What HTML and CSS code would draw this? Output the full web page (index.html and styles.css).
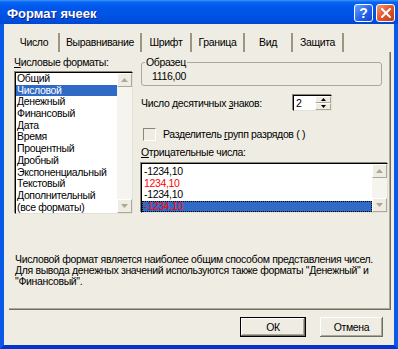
FILE: index.html
```html
<!DOCTYPE html>
<html lang="ru">
<head>
<meta charset="utf-8">
<title>Формат ячеек</title>
<link rel="stylesheet" href="styles.css">
</head>
<body>
<div class="window">
  <div class="titlebar">
    <span class="title">Формат ячеек</span>
    <div class="tb-buttons">
      <span class="tb-btn help">?</span>
      <span class="tb-btn close"><svg width="10" height="10" viewBox="0 0 10 10"><path d="M1 1L9 9M9 1L1 9" stroke="#fff" stroke-width="2" stroke-linecap="square"/></svg></span>
    </div>
  </div>
  <div class="frame">
    <div class="tabs">
      <div class="tab tab-1">Число</div>
      <div class="tab tab-2">Выравнивание</div>
      <div class="tab tab-3">Шрифт</div>
      <div class="tab tab-4">Граница</div>
      <div class="tab tab-5">Вид</div>
      <div class="tab tab-6">Защита</div>
    </div>
    <div class="panel">
      <div class="panel-top">
        <div class="left-col">
          <div class="label"><u>Ч</u>исловые форматы:</div>
          <div class="listbox fmt-list">
            <div class="items">
              <div class="item">Общий</div>
              <div class="item selected">Числовой</div>
              <div class="item">Денежный</div>
              <div class="item">Финансовый</div>
              <div class="item">Дата</div>
              <div class="item">Время</div>
              <div class="item">Процентный</div>
              <div class="item">Дробный</div>
              <div class="item">Экспоненциальный</div>
              <div class="item">Текстовый</div>
              <div class="item">Дополнительный</div>
              <div class="item">(все форматы)</div>
            </div>
            <div class="vscroll">
              <div class="sbtn"><svg width="7" height="4" viewBox="0 0 7 4"><path d="M0 4L3.5 0L7 4Z" fill="#aca899"/></svg></div>
              <div class="track"></div>
              <div class="sbtn"><svg width="7" height="4" viewBox="0 0 7 4"><path d="M0 0L3.5 4L7 0Z" fill="#aca899"/></svg></div>
            </div>
          </div>
        </div>
        <div class="right-col">
          <fieldset class="sample">
            <legend>Образец</legend>
            <div class="sample-value">1116,00</div>
          </fieldset>
          <div class="dec-row">
            <span class="dec-label">Число десятичных <u>з</u>наков:</span>
            <div class="spin">
              <span class="spin-value">2</span>
              <div class="spin-btns">
                <div class="spin-btn"><svg width="5" height="3" viewBox="0 0 5 3"><path d="M0 3L2.5 0L5 3Z" fill="#000"/></svg></div>
                <div class="spin-btn"><svg width="5" height="3" viewBox="0 0 5 3"><path d="M0 0L2.5 3L5 0Z" fill="#000"/></svg></div>
              </div>
            </div>
          </div>
          <div class="check-row">
            <span class="checkbox"></span>
            <span class="check-label">Разделитель <u>г</u>рупп разрядов ( )</span>
          </div>
          <div class="label neg-label"><u>О</u>трицательные числа:</div>
          <div class="listbox neg-list">
            <div class="items">
              <div class="item">-1234,10</div>
              <div class="item red">1234,10</div>
              <div class="item">-1234,10</div>
              <div class="item red selected focus">-1234,10</div>
            </div>
            <div class="vscroll">
              <div class="sbtn"><svg width="7" height="4" viewBox="0 0 7 4"><path d="M0 4L3.5 0L7 4Z" fill="#aca899"/></svg></div>
              <div class="track"></div>
              <div class="sbtn"><svg width="7" height="4" viewBox="0 0 7 4"><path d="M0 0L3.5 4L7 0Z" fill="#aca899"/></svg></div>
            </div>
          </div>
        </div>
      </div>
      <p class="desc">Числовой формат является наиболее общим способом представления чисел.<br>Для вывода денежных значений используются также форматы "Денежный" и<br>"Финансовый".</p>
    </div>
    <div class="buttons">
      <button class="btn btn-ok">ОК</button>
      <button class="btn btn-cancel">Отмена</button>
    </div>
  </div>
</div>
</body>
</html>
```
FILE: styles.css
```css
* { box-sizing: border-box; }
html, body { margin: 0; padding: 0; }
body {
  width: 398px;
  height: 349px;
  overflow: hidden;
  font-family: "Liberation Sans", Arial, sans-serif;
  font-size: 10.5px;
  letter-spacing: -0.35px;
  color: #000;
  background: #fff;
}
.window {
  width: 398px;
  height: 349px;
  display: flex;
  flex-direction: column;
}
.titlebar {
  height: 24px;
  flex: none;
  display: flex;
  align-items: flex-start;
  background: linear-gradient(to bottom, #3d95ff 0, #0a66f0 2px, #0058ee 6px, #0055e8 50%, #0050e0 80%, #0046d0 100%);
}
.title {
  margin: 6px 0 0 7px;
  font-weight: bold;
  font-size: 13px;
  letter-spacing: 0;
  line-height: 16px;
  color: #fff;
  text-shadow: 1px 1px 0 #0a1f8a;
}
.tb-buttons {
  margin: 4px 3px 0 auto;
  display: flex;
  gap: 3px;
}
.tb-btn {
  width: 19px;
  height: 18px;
  border: 1px solid #fff;
  border-radius: 3px;
  display: flex;
  align-items: center;
  justify-content: center;
}
.help {
  background: linear-gradient(135deg, #6aa4ff, #2462f0 55%, #1048d0);
  color: #fff;
  font-weight: bold;
  font-size: 14px;
  letter-spacing: 0;
  line-height: 14px;
}
.close {
  background: linear-gradient(135deg, #f39a74, #e0552e 50%, #c23c18);
}
.frame {
  flex: 1;
  display: flex;
  flex-direction: column;
  background: #efede3;
  border-left: 4px solid #0a5ae8;
  border-right: 4px solid #0a5ae8;
  border-bottom: 4px solid #0334cc;
}
.tabs {
  display: flex;
  margin: 9px 0 0 6px;
  height: 19px;
}
.tab {
  border-right: 2px solid #9c9584;
  text-align: center;
  line-height: 19px;
  white-space: nowrap;
}
.tab-1 { width: 50px; }
.tab-2 { width: 82px; }
.tab-3 { width: 50px; }
.tab-4 { width: 53px; }
.tab-5 { width: 48px; }
.tab-6 { width: 51px; }
.panel {
  margin-left: 5px;
  width: 382px;
  height: 258px;
  flex: none;
  border-right: 1px solid #716f64;
  border-bottom: 1px solid #716f64;
  box-shadow: inset -1px -1px 0 #aca899;
  padding: 4px 0 0 5px;
  display: flex;
  flex-direction: column;
}
.panel-top {
  display: flex;
  gap: 8px;
}
.left-col { width: 119px; }
.right-col { width: 248px; }
.label {
  line-height: 13px;
  white-space: nowrap;
}
.listbox {
  display: flex;
  background: #fff;
  border: 1px solid;
  border-color: #000 #e4e2d6 #e4e2d6 #000;
  box-shadow: -1px -1px 0 #8a8678;
}
.items {
  flex: 1;
  min-width: 0;
  overflow: hidden;
}
.item {
  white-space: nowrap;
}
.fmt-list {
  margin: 3px 0 0 1px;
  width: 118px;
  height: 142px;
}
.fmt-list .item {
  height: 11.7px;
  line-height: 11.7px;
  padding-left: 1px;
}
.item.selected {
  background: #316ac5;
  color: #fff;
}
.item.red { color: #ff0000; }
.item.red.selected { color: #ff0000; }
.item.focus {
  outline: 1px dotted #000;
  outline-offset: -1px;
}
.vscroll {
  width: 15px;
  flex: none;
  display: flex;
  flex-direction: column;
  background: #f5f4ee;
}
.track { flex: 1; }
.sbtn {
  height: 14px;
  flex: none;
  background: #efede3;
  border: 1px solid;
  border-color: #fff #aca899 #aca899 #fff;
  display: flex;
  align-items: center;
  justify-content: center;
}
.sample {
  margin: 0;
  width: 241px;
  padding: 1px 8px 2px 2px;
  border: 1px solid #aca899;
  border-radius: 3px;
  min-width: 0;
}
.sample legend {
  padding: 0 1px;
  margin-left: 1px;
  line-height: 13px;
}
.sample-value {
  margin-left: 8px;
  line-height: 13px;
}
.dec-row {
  display: flex;
  align-items: center;
  margin-top: 9px;
  height: 16px;
}
.dec-label {
  flex: 0 0 152px;
  line-height: 13px;
  white-space: nowrap;
}
.spin {
  width: 39px;
  height: 16px;
  display: flex;
  background: #fff;
  border: 1px solid;
  border-color: #000 #e4e2d6 #e4e2d6 #000;
  box-shadow: -1px -1px 0 #8a8678;
}
.spin-value {
  flex: 1;
  padding-left: 2px;
  line-height: 14px;
}
.spin-btns {
  width: 16px;
  display: flex;
  flex-direction: column;
}
.spin-btn {
  flex: 1;
  background: #efede3;
  border: 1px solid;
  border-color: #fff #aca899 #aca899 #fff;
  display: flex;
  align-items: center;
  justify-content: center;
}
.check-row {
  display: flex;
  align-items: center;
  margin-top: 17px;
  height: 13px;
}
.checkbox {
  width: 13px;
  height: 13px;
  margin-left: 2px;
  border: 1px solid;
  border-color: #8a8678 #fff #fff #8a8678;
  background: #efede3;
}
.check-label {
  margin-left: 7px;
  white-space: nowrap;
  line-height: 13px;
}
.neg-label { margin-top: 5px; }
.neg-list {
  margin-top: 4px;
  width: 247px;
  height: 50px;
}
.neg-list .items { padding-top: 2px; }
.neg-list .item {
  height: 11.5px;
  line-height: 11.5px;
  padding-left: 2px;
}
.desc {
  margin: 40px 0 0 1px;
  line-height: 11px;
  white-space: nowrap;
}
.buttons {
  display: flex;
  justify-content: flex-end;
  gap: 14px;
  margin-top: 7px;
  padding-right: 11px;
}
.btn {
  height: 20px;
  padding: 0;
  font: inherit;
  letter-spacing: inherit;
  color: #000;
  background: #efede3;
}
.btn-ok {
  width: 66px;
  border: 1px solid #000;
  box-shadow: inset -1px -1px 0 #716f64, inset 1px 1px 0 #fff, inset -2px -2px 0 #aca899;
}
.btn-cancel {
  width: 63px;
  border: none;
  box-shadow: inset -1px -1px 0 #716f64, inset 1px 1px 0 #fff, inset -2px -2px 0 #aca899;
}
```
